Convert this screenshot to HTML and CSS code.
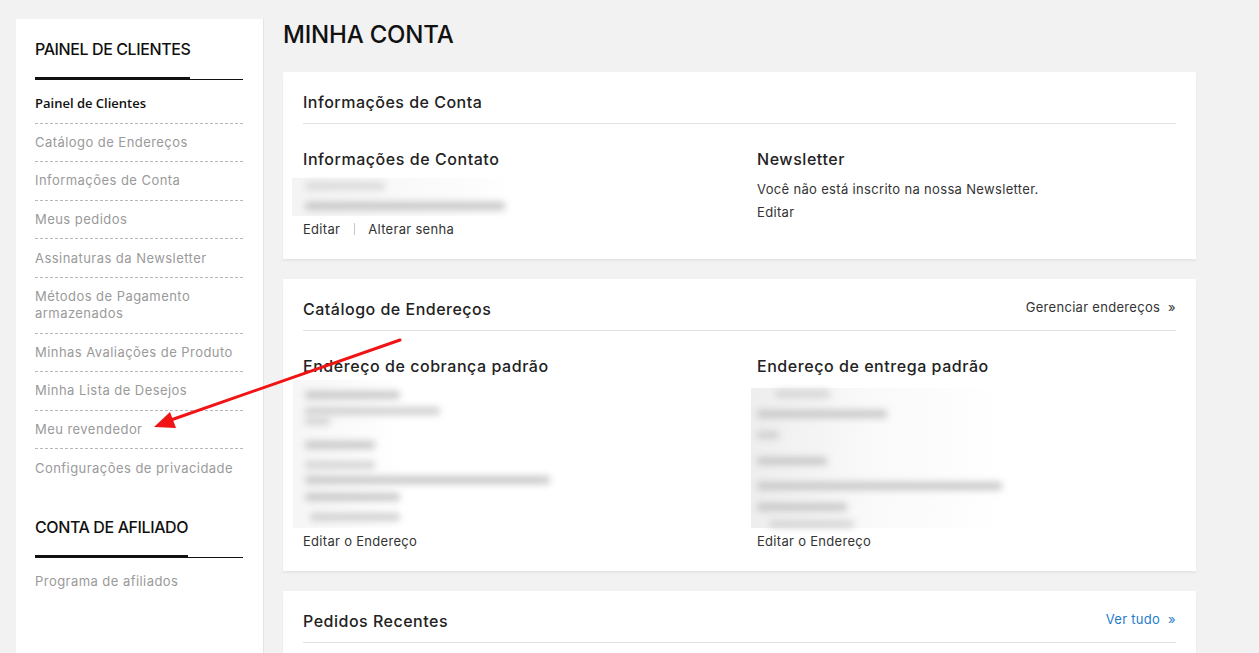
FILE: index.html
```html
<!DOCTYPE html>
<html lang="pt-BR">
<head>
<meta charset="utf-8">
<title>Minha Conta</title>
<link rel="stylesheet" href="styles.css">
</head>
<body>
<div class="page">
  <aside class="sidebar">
    <div class="block">
      <div class="block-title"><strong>PAINEL DE CLIENTES</strong></div>
      <ul class="nav">
        <li class="current">Painel de Clientes</li>
        <li>Catálogo de Endereços</li>
        <li>Informações de Conta</li>
        <li>Meus pedidos</li>
        <li>Assinaturas da Newsletter</li>
        <li>Métodos de Pagamento armazenados</li>
        <li>Minhas Avaliações de Produto</li>
        <li>Minha Lista de Desejos</li>
        <li>Meu revendedor</li>
        <li>Configurações de privacidade</li>
      </ul>
    </div>
    <div class="block block-second">
      <div class="block-title"><strong>CONTA DE AFILIADO</strong></div>
      <ul class="nav">
        <li>Programa de afiliados</li>
      </ul>
    </div>
  </aside>

  <main class="main">
    <h1 class="page-title">MINHA CONTA</h1>

    <section class="card">
      <div class="card-head"><h2>Informações de Conta</h2></div>
      <div class="card-body">
        <div class="col">
          <h3>Informações de Contato</h3>
          <div class="blur blur-contact">
            <span class="bar b1"></span>
            <span class="bar b2"></span>
          </div>
          <div class="actions"><a>Editar</a><span class="sep"></span><a>Alterar senha</a></div>
        </div>
        <div class="col">
          <h3>Newsletter</h3>
          <p class="line">Você não está inscrito na nossa Newsletter.</p>
          <p class="line"><a>Editar</a></p>
        </div>
      </div>
    </section>

    <section class="card">
      <div class="card-head"><h2>Catálogo de Endereços</h2><a class="more">Gerenciar endereços&nbsp; »</a></div>
      <div class="card-body">
        <div class="col">
          <h3>Endereço de cobrança padrão</h3>
          <div class="blur blur-billing">
            <span class="bar a1"></span>
            <span class="bar a2"></span>
            <span class="bar a3"></span>
            <span class="bar a4"></span>
            <span class="bar a5"></span>
            <span class="bar a6"></span>
            <span class="bar a7"></span>
            <span class="bar a8"></span>
          </div>
          <div class="actions"><a>Editar o Endereço</a></div>
        </div>
        <div class="col">
          <h3>Endereço de entrega padrão</h3>
          <div class="blur blur-shipping">
            <span class="bar s1"></span>
            <span class="bar s2"></span>
            <span class="bar s3"></span>
            <span class="bar s4"></span>
            <span class="bar s5"></span>
            <span class="bar s6"></span>
            <span class="bar s7"></span>
          </div>
          <div class="actions"><a>Editar o Endereço</a></div>
        </div>
      </div>
    </section>

    <section class="card">
      <div class="card-head"><h2>Pedidos Recentes</h2><a class="more blue">Ver tudo&nbsp; »</a></div>
      <div class="card-body-empty"></div>
    </section>
  </main>
</div>

<svg class="arrow" width="1259" height="653" viewBox="0 0 1259 653" xmlns="http://www.w3.org/2000/svg">
  <line x1="400" y1="340" x2="168" y2="421" stroke="#f01414" stroke-width="3" stroke-linecap="round"/>
  <polygon points="154,427 170,412 176,428" fill="#f01414"/>
</svg>
</body>
</html>
```

FILE: styles.css
```css
html, body {
  margin: 0;
  padding: 0;
}

body {
  background: #f2f2f2;
  font-family: "Inter", "Noto Sans", "Liberation Sans", sans-serif;
  color: #333;
  overflow: hidden;
  height: 653px;
  position: relative;
}

.page {
  display: flex;
  align-items: flex-start;
  gap: 20px;
  padding: 19px 0 0 16px;
  width: 1180px;
}

/* ---------- Sidebar ---------- */
.sidebar {
  width: 247px;
  flex: 0 0 247px;
  box-sizing: border-box;
  background: #fff;
  padding: 20px 20px 0 19px;
  min-height: 700px;
  box-shadow: 1px 0 0 #e4e4e4;
}

.block-title {
  display: flex;
  border-bottom: 1px solid #111;
}

.block-title strong {
  display: block;
  font-size: 16px;
  font-weight: 500;
  line-height: 20px;
  color: #111;
  letter-spacing: -0.4px;
  padding-bottom: 18px;
  border-bottom: 3px solid #111;
  margin-bottom: -1px;
}

.nav {
  list-style: none;
  margin: 5px 0 0;
  padding: 0;
}

.nav li {
  font-size: 13px;
  line-height: 17px;
  padding: 10.3px 0;
  color: #9a9a9a;
  letter-spacing: 0.45px;
  border-bottom: 1px dashed #b8b8b8;
}

.nav li:last-child {
  border-bottom: 0;
}

.nav li.current {
  font-family: "Open Sans", "Noto Sans", sans-serif;
  font-weight: 600;
  color: #111;
  letter-spacing: 0;
}

.block-second {
  margin-top: 30px;
}

/* ---------- Main ---------- */
.main {
  width: 913px;
  flex: 0 0 913px;
}

.page-title {
  margin: 1px 0 22px;
  font-size: 24px;
  line-height: 30px;
  font-weight: 500;
  color: #111;
  letter-spacing: -0.2px;
}

.card {
  background: #fff;
  padding: 20px;
  margin-bottom: 20px;
  box-shadow: 0 2px 2px rgba(0, 0, 0, 0.05);
}

.card-head {
  display: flex;
  justify-content: space-between;
  align-items: center;
  padding-bottom: 11px;
  border-bottom: 1px solid #e2e2e2;
}

.card-head h2 {
  margin: 0;
  font-size: 16px;
  line-height: 20px;
  font-weight: 500;
  color: #222;
  letter-spacing: 0.5px;
}

.more {
  font-size: 13px;
  line-height: 18px;
  color: #333;
  margin-top: -4px;
  letter-spacing: 0.3px;
}

.more.blue {
  color: #1f7cc9;
}

.card-body {
  display: grid;
  grid-template-columns: 1fr 1fr;
  column-gap: 35px;
  margin-top: 24px;
}

.card-body-empty {
  height: 120px;
}

.col h3 {
  margin: 0;
  font-size: 16px;
  line-height: 22px;
  font-weight: 500;
  color: #222;
  letter-spacing: 0.55px;
}

.line {
  margin: 0;
  font-size: 13px;
  line-height: 23px;
  color: #333;
  letter-spacing: 0.33px;
}

.col h3 + .line {
  margin-top: 8px;
}

.actions {
  display: flex;
  align-items: center;
  font-size: 13px;
  line-height: 20px;
  color: #333;
  letter-spacing: 0.3px;
}

.sep {
  width: 1px;
  height: 12px;
  background: #c8c8c8;
  margin: 0 13px 0 14px;
}

/* ---------- Blurred private data ---------- */
.blur {
  display: flex;
  flex-direction: column;
  align-items: flex-start;
  box-sizing: border-box;
}

.bar {
  display: block;
  height: 8px;
  background: #c8c8c8;
  filter: blur(3.5px);
  border-radius: 3px;
}

.blur-contact {
  margin: 8px 0 3px -11px;
  width: 224px;
  height: 38px;
  padding: 4px 0 0 13px;
  background: linear-gradient(90deg, #f4f4f4, #fbfbfb 70%, #fff);
}
.blur-contact .b1 { width: 80px; background: #dadada; }
.blur-contact .b2 { width: 200px; margin-top: 12px; background: #c6c6c6; }

.blur-billing {
  margin: 3px 0 3px -10px;
  height: 148px;
  padding: 11px 0 0 12px;
  background: linear-gradient(90deg, #f6f6f6, #fff 40%);
  width: 268px;
}
.blur-billing .a1 { width: 95px; }
.blur-billing .a2 { width: 135px; margin-top: 8px; background: #d0d0d0; }
.blur-billing .a3 { width: 25px; margin-top: 2px; background: #d4d4d4; }
.blur-billing .a4 { width: 70px; margin-top: 16px; }
.blur-billing .a5 { width: 70px; margin-top: 12px; background: #d4d4d4; }
.blur-billing .a6 { width: 245px; margin-top: 7px; }
.blur-billing .a7 { width: 95px; margin-top: 9px; }
.blur-billing .a8 { width: 90px; margin-top: 12px; margin-left: 5px; background: #d0d0d0; }

.blur-shipping {
  margin: 11px 0 3px -6px;
  height: 140px;
  width: 254px;
  padding: 2px 0 0 6px;
  background: linear-gradient(90deg, #eeeeee, #f9f9f9 45%, #fff);
}
.blur-shipping .s1 { width: 55px; margin-left: 18px; background: #d6d6d6; }
.blur-shipping .s2 { width: 130px; margin-top: 12px; }
.blur-shipping .s3 { width: 22px; margin-top: 13px; background: #d0d0d0; }
.blur-shipping .s4 { width: 70px; margin-top: 18px; }
.blur-shipping .s5 { width: 245px; margin-top: 17px; }
.blur-shipping .s6 { width: 90px; margin-top: 13px; }
.blur-shipping .s7 { width: 85px; margin-top: 9px; margin-left: 12px; background: #d6d6d6; }

/* ---------- Annotation arrow ---------- */
.arrow {
  position: absolute;
  left: 0;
  top: 0;
  pointer-events: none;
}
```
